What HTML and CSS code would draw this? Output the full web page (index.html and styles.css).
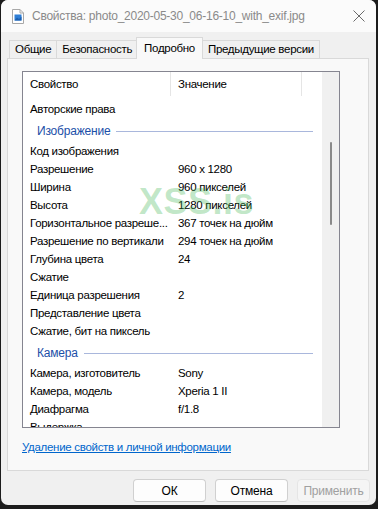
FILE: index.html
```html
<!DOCTYPE html>
<html lang="ru">
<head>
  <meta charset="UTF-8" />
  <title>Свойства</title>
  <link rel="stylesheet" href="styles.css">
</head>
<body>

<div class="window">

  <!-- Title bar -->
  <div class="titlebar">
    <svg class="file-icon" width="12" height="15" viewBox="0 0 12 15">
      <path d="M0.5 0.5 H8 L11.5 4 V14.5 H0.5 Z" fill="#fff" stroke="#a8a8a8"/>
      <path d="M8 0.5 V4 H11.5" fill="none" stroke="#a8a8a8"/>
      <rect x="2.5" y="5.5" width="7" height="6" fill="#2f7fd6"/>
      <path d="M2.5 11.5 L5 8.5 L7 10 L9.5 7.5 V11.5 Z" fill="#1b5fb0"/>
    </svg>
    <span class="title">Свойства: photo_2020-05-30_06-16-10_with_exif.jpg</span>
    <svg class="close" width="12" height="12" viewBox="0 0 12 12">
      <path d="M0.5 0.5 L11.5 11.5 M11.5 0.5 L0.5 11.5" stroke="#6a6a6a" stroke-width="1"/>
    </svg>
  </div>

  <!-- Tabs -->
  <div class="tabs">
    <div class="tab">Общие</div>
    <div class="tab">Безопасность</div>
    <div class="tab active">Подробно</div>
    <div class="tab">Предыдущие версии</div>
  </div>

  <div class="page">
    <div class="listbox">
      <div class="list">
        <div class="head">
          <div class="hcell">Свойство</div>
          <div class="hcell">Значение</div>
          <div class="hcell last"></div>
        </div>

        <div class="row"><span>Авторские права</span><span></span></div>

        <div class="group"><span>Изображение</span><i></i></div>
        <div class="row"><span>Код изображения</span><span></span></div>
        <div class="row"><span>Разрешение</span><span>960 x 1280</span></div>
        <div class="row"><span>Ширина</span><span>960 пикселей</span></div>
        <div class="row"><span>Высота</span><span>1280 пикселей</span></div>
        <div class="row"><span>Горизонтальное разреше...</span><span>367 точек на дюйм</span></div>
        <div class="row"><span>Разрешение по вертикали</span><span>294 точек на дюйм</span></div>
        <div class="row"><span>Глубина цвета</span><span>24</span></div>
        <div class="row"><span>Сжатие</span><span></span></div>
        <div class="row"><span>Единица разрешения</span><span>2</span></div>
        <div class="row"><span>Представление цвета</span><span></span></div>
        <div class="row"><span>Сжатие, бит на пиксель</span><span></span></div>

        <div class="group"><span>Камера</span><i></i></div>
        <div class="row"><span>Камера, изготовитель</span><span>Sony</span></div>
        <div class="row"><span>Камера, модель</span><span>Xperia 1 II</span></div>
        <div class="row"><span>Диафрагма</span><span>f/1.8</span></div>
        <div class="row"><span>Выдержка</span><span></span></div>
      </div>

      <div class="scrollbar"><div class="thumb"></div></div>

      <!-- watermark over the list -->
      <div class="watermark">XSS.is</div>
    </div>

    <a class="link" href="#">Удаление свойств и личной информации</a>
  </div>

  <div class="buttons">
    <button class="btn">ОК</button>
    <button class="btn">Отмена</button>
    <button class="btn disabled">Применить</button>
  </div>

</div>

</body>
</html>
```

FILE: styles.css
```css
body {
  margin: 0;
  background: #1c1c1c;
  font-family: "Liberation Sans", Arial, sans-serif;
  font-size: 11.5px;
  letter-spacing: -0.3px;
  color: #000;
}

.window {
  width: 375px;
  height: 505px;
  margin-left: 1px;
  background: #f0f0f0;
  border-radius: 7px;
  overflow: hidden;
  display: flex;
  flex-direction: column;
}

.titlebar {
  height: 32px;
  background: #fbfbfb;
  display: flex;
  align-items: center;
  padding-left: 11px;
  flex-shrink: 0;
}

.file-icon {
  margin-right: 8px;
}

.title {
  color: #8a8a8a;
  font-size: 12px;
  letter-spacing: -0.25px;
  flex: 1;
  white-space: nowrap;
}

.close {
  margin-right: 11px;
}

/* Tabs */
.tabs {
  display: flex;
  align-items: flex-end;
  padding: 5px 0 0 8px;
  height: 21px;
  position: relative;
  z-index: 1;
  flex-shrink: 0;
}

.tab {
  height: 17px;
  line-height: 17px;
  padding: 0 5px;
  background: #f0f0f0;
  border: 1px solid #d9d9d9;
  border-bottom: none;
  margin-right: -1px;
  white-space: nowrap;
}

.tab.active {
  height: 21px;
  line-height: 21px;
  background: #f9f9f9;
  padding: 0 7px;
  margin: 0 -1px 0 -1px;
  position: relative;
  top: 1px;
}

.page {
  margin: 0 7px 0 6px;
  height: 413px;
  flex-shrink: 0;
  background: #f9f9f9;
  border: 1px solid #d9d9d9;
  padding: 12px 0 0 14px;
  box-sizing: border-box;
  display: flex;
  flex-direction: column;
}

.listbox {
  width: 318px;
  height: 357px;
  flex-shrink: 0;
  background: #fff;
  border: 1px solid #858590;
  box-sizing: border-box;
  display: flex;
  overflow: hidden;
  position: relative;
}

.list {
  flex: 1;
  overflow: hidden;
}

.head {
  display: grid;
  grid-template-columns: 148px 131px 1fr;
  height: 24px;
  margin-bottom: 4px;
}

.hcell {
  line-height: 24px;
  padding-left: 7px;
  border-right: 1px solid #e5e5e5;
}

.hcell.last {
  border-right: none;
}

.row {
  display: grid;
  grid-template-columns: 148px 1fr;
  height: 18px;
  line-height: 18px;
  padding-left: 7px;
  white-space: nowrap;
}

.group {
  display: flex;
  align-items: center;
  height: 22px;
  margin-top: 2px;
  padding-left: 14px;
  color: #1c4fa8;
  font-size: 12px;
  letter-spacing: -0.2px;
}

.group i {
  flex: 1;
  height: 1px;
  background: #a9b7dc;
  margin: 0 9px 0 6px;
}

.scrollbar {
  width: 17px;
  background: #f0f0f0;
  display: flex;
  justify-content: center;
  padding-top: 70px;
  box-sizing: border-box;
}

.thumb {
  width: 2px;
  height: 83px;
  background: #8a8a8a;
  border-radius: 1px;
}

.watermark {
  position: absolute;
  left: 116px;
  top: 109px;
  font-size: 36px;
  font-weight: bold;
  letter-spacing: 0.5px;
  color: rgba(60, 180, 80, 0.33);
  pointer-events: none;
}

.link {
  margin-top: 11px;
  line-height: 16px;
  color: #0066cc;
  text-decoration: underline;
  align-self: flex-start;
}

/* Bottom buttons */
.buttons {
  display: flex;
  justify-content: flex-end;
  gap: 9px;
  padding: 8px 6px 0 0;
}

.btn {
  width: 73px;
  height: 23px;
  font-family: "Liberation Sans", Arial, sans-serif;
  font-size: 12px;
  letter-spacing: -0.2px;
  color: #000;
  background: #fdfdfd;
  border: 1px solid #d0d0d0;
  border-bottom-color: #bcbcbc;
  border-radius: 4px;
  padding: 0;
}

.btn.disabled {
  color: #a0a0a0;
  background: #f5f5f5;
  border-color: #e5e5e5;
}
```
